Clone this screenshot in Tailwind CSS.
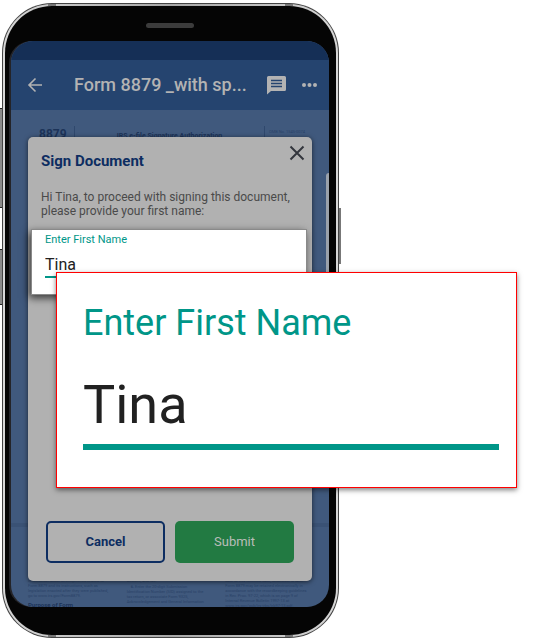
<!DOCTYPE html>
<html lang="en">
<head>
  <meta charset="UTF-8" />
  <meta name="viewport" content="width=device-width, initial-scale=1.0" />
  <title>Sign Document</title>
  <script src="https://cdn.jsdelivr.net/npm/@tailwindcss/browser@4"></script>
</head>
<body class="bg-white font-['Roboto',sans-serif]">
  <main class="relative px-[2px] pt-[3px]">

    <!-- PHONE -->
    <div class="relative w-full max-w-[337px]">
      <!-- side keys -->
      <div class="absolute -left-[2px] top-[105px] h-[100px] w-[3px] border-y border-[#222] bg-[#8a8a8a]"></div>
      <div class="absolute -left-[2px] top-[246px] h-[56px] w-[3px] border-y border-[#222] bg-[#8a8a8a]"></div>
      <div class="absolute -right-[2px] top-[205px] h-[56px] w-[3px] bg-[#777]"></div>

      <div class="relative rounded-[50px] bg-[#444] p-px">
        <!-- antenna bands -->
        <div class="absolute top-px left-[46px] h-[2px] w-2 bg-[#777]"></div>
        <div class="absolute top-px right-[46px] h-[2px] w-2 bg-[#777]"></div>
        <div class="absolute bottom-px left-[46px] h-[2px] w-2 bg-[#777]"></div>
        <div class="absolute right-[46px] bottom-px h-[2px] w-2 bg-[#777]"></div>
        <div class="rounded-[49px] bg-linear-to-r from-[#d8d8d8] via-[#a8a8a8] to-[#d8d8d8] p-[2px]">
          <div class="overflow-hidden rounded-[47px] bg-[#050505] pr-[7px] pb-[28px] pl-[2px]">
            <div class="pl-1">
              <div class="flex h-[35px] items-center justify-center">
                <div class="mt-1 h-[5px] w-12 rounded-full bg-[#3c3c3c]"></div>
              </div>

              <!-- SCREEN -->
              <div class="flex flex-col overflow-hidden rounded-[22px] bg-[#40597d] shadow-[-2px_0_0_#242428]">
                <div class="h-[19px] bg-[#152f56]"></div>
                <header class="flex h-[50px] items-center bg-[#25446f] px-4 text-[#b3b3b3]">
                  <button aria-label="Back" class="shrink-0">
                    <svg class="size-4" viewBox="0 0 16 16" fill="none" stroke="currentColor" stroke-width="1.6"><path d="M15 8H2M8.500 1.500 2 8l6.500 6.500" /></svg>
                  </button>
                  <h1 class="ml-[31px] flex-1 truncate text-lg font-medium">Form 8879 _with sp...</h1>
                  <button aria-label="Comments" class="shrink-0">
                    <svg class="size-[19px]" viewBox="0 0 19 19"><path d="M1.500 0h16A1.500 1.500 0 0 1 19 1.500v12a1.500 1.500 0 0 1-1.500 1.500H4L0 18.500v-17A1.500 1.500 0 0 1 1.500 0z" fill="currentColor" /><path d="M4 4.500h11M4 7.500h11M4 10.500h11" stroke="#25446f" stroke-width="1.500" /></svg>
                  </button>
                  <button aria-label="More" class="-mr-1 ml-4 shrink-0">
                    <svg class="h-4 w-[15px]" viewBox="0 0 15 16" fill="currentColor"><circle cx="2" cy="8" r="2" /><circle cx="7.500" cy="8" r="2" /><circle cx="13" cy="8" r="2" /></svg>
                  </button>
                </header>

                <div class="grid">
                  <!-- form behind the dialog -->
                  <div class="col-start-1 row-start-1 flex flex-col text-[#1c3358]">
                    <div class="flex h-[46px] items-start pt-4 pl-7">
                      <span class="w-9 border-r border-[#2f486d] text-xs leading-4 font-bold">8879</span>
                      <span class="flex-1 pt-1 text-center text-[7px] leading-3 font-bold">IRS e-file Signature Authorization</span>
                      <span class="mr-4 border-l border-[#2f486d] pr-2 pb-2 pl-1 text-[4px] leading-3 text-[#2a4267]">OMB No. 1545-0074</span>
                    </div>
                    <div class="mt-[17px] h-[310px] w-[3px] self-end rounded-l bg-[#9aa1ab]"></div>
                    <div class="mt-10 h-1 bg-[#3a5275]"></div>
                    <div class="mt-auto grid h-[29px] grid-cols-3 gap-x-3 overflow-hidden px-[17px] text-[4px] leading-[5px] whitespace-nowrap text-[#2a4267]">
                      <div>
                        <p>information about developments related to</p>
                        <p>Form 8879 and its instructions, such as</p>
                        <p>legislation enacted after they were published,</p>
                        <p>go to www.irs.gov/Form8879.</p>
                        <p class="pt-1 text-[6px] font-bold text-[#1c3358]">Purpose of Form</p>
                      </div>
                      <div>
                        <p>website, and tax.</p>
                        <p class="pt-px pl-1"><b>6.</b> Enter the 20-digit Submission</p>
                        <p>Identification Number (SID) assigned to the</p>
                        <p>tax return, or associate Form 9325,</p>
                        <p>Acknowledgement and General Information</p>
                      </div>
                      <div>
                        <p>date of this received date, whichever is later.</p>
                        <p>Form 8879 may be retained electronically in</p>
                        <p>accordance with the recordkeeping guidelines</p>
                        <p>in Rev. Proc. 97-22, which is on page 9 of</p>
                        <p>Internal Revenue Bulletin 1997-13 at</p>
                        <p>www.irs.gov/pub/irs-irbs/irb97-13.pdf.</p>
                      </div>
                    </div>
                  </div>

                  <!-- SIGN DIALOG -->
                  <section role="dialog" aria-labelledby="dialogTitle" class="col-start-1 row-start-1 mx-[17px] mt-[27px] mb-[26px] flex min-h-[444px] flex-col rounded-[5px] bg-[#b1b1b1] shadow-[0_1px_5px_rgba(0,0,0,0.6)]">
                    <div class="flex items-start justify-between pt-2 pr-[7px] pl-[13px]">
                      <h2 id="dialogTitle" class="pt-1 text-[15px] leading-6 font-bold text-[#0d2d61]">Sign Document</h2>
                      <button aria-label="Close">
                        <svg class="size-4" viewBox="0 0 16 16" fill="none" stroke="#33363d" stroke-width="2"><path d="M1.500 1.500l13 13M14.500 1.500l-13 13" /></svg>
                      </button>
                    </div>
                    <p class="mt-[17px] pl-[13px] text-[12px] leading-[14px] text-[#4a4a4a]">Hi Tina, to proceed with signing this document,<br />please provide your first name:</p>
                    <div class="mt-[11px] mr-[5px] ml-[3px] h-[66px] border border-[#8a8a8a] bg-white px-[13px] pt-1 shadow-[-2px_3px_8px_rgba(0,0,0,0.7)]">
                      <label for="firstName" class="block text-[11px] leading-3 text-[#009688]">Enter First Name</label>
                      <input id="firstName" type="text" value="Tina" class="mt-1 h-7 w-full border-b-2 border-[#009688] pt-[2px] text-base text-[#212121] outline-none" />
                    </div>
                    <div class="mt-auto grid grid-cols-2 gap-[10px] px-[18px] pb-[18px] text-[13px]">
                      <button class="h-[42px] rounded-[5px] border-2 border-[#0d2d61] font-bold text-[#0d2d61]">Cancel</button>
                      <button class="h-[42px] rounded-[5px] bg-[#227a42] text-[#b9bdb9]">Submit</button>
                    </div>
                  </section>
                </div>
              </div>
            </div>
          </div>
        </div>
      </div>
    </div>

    <!-- MAGNIFIED FIELD -->
    <div class="absolute top-[272px] right-[31px] left-14 border border-[#f00] bg-white pt-7 pr-[17px] pb-[37px] pl-[26px] shadow-[0_2px_5px_rgba(0,0,0,0.5)]">
      <label for="firstNameLarge" class="block text-[36px] leading-[44px] text-[#009688]">Enter First Name</label>
      <input id="firstNameLarge" type="text" value="Tina" class="mt-6 h-[81px] w-full border-b-6 border-[#009688] pb-1 text-[54px] leading-none text-[#212121] outline-none" />
    </div>
  </main>
</body>
</html>
